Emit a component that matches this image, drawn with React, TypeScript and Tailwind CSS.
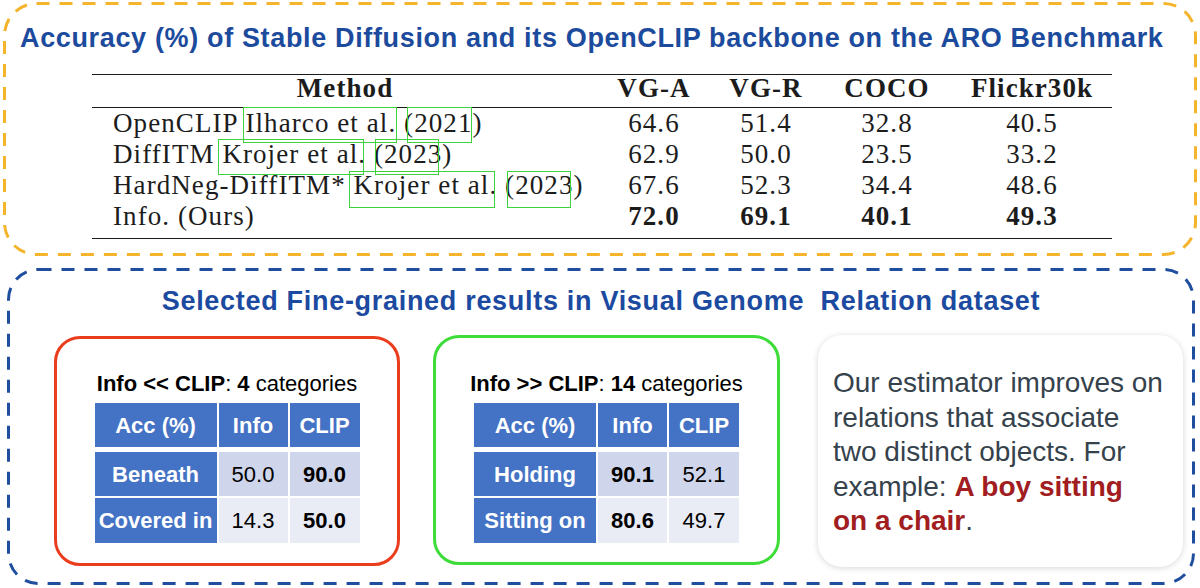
import React from 'react'

const rows = [
  { method: 'OpenCLIP Ilharco et al. (2021)', vals: ['64.6', '51.4', '32.8', '40.5'], bold: false },
  { method: 'DiffITM Krojer et al. (2023)', vals: ['62.9', '50.0', '23.5', '33.2'], bold: false },
  { method: 'HardNeg-DiffITM* Krojer et al. (2023)', vals: ['67.6', '52.3', '34.4', '48.6'], bold: false },
  { method: 'Info. (Ours)', vals: ['72.0', '69.1', '40.1', '49.3'], bold: true },
]

// green citation boxes over the table, [left, top, width, height]
const citeBoxes = [
  [151, 33.5, 154, 36],
  [315, 33.5, 65, 36],
  [126, 65.5, 146, 36],
  [283, 65.5, 64, 36],
  [257, 97.5, 146, 37],
  [415, 97.5, 64, 37],
]

function DashedFrame({ w, h, r, color }: { w: number; h: number; r: number; color: string }) {
  return (
    <svg className="pointer-events-none absolute left-0 top-0" width={w} height={h}>
      <rect x={1.5} y={1.5} width={w - 3} height={h - 3} rx={r} fill="none" stroke={color} strokeWidth={3} strokeDasharray="13 10" />
    </svg>
  )
}

type Cell = { text: string; bold?: boolean }

function MiniTable({ body }: { body: [string, Cell, Cell][] }) {
  return (
    <div className="mx-auto w-[265px] text-[22px]">
      <div className="grid h-[44px] grid-cols-[122px_69px_70px] gap-x-[2px] font-bold text-white">
        {['Acc (%)', 'Info', 'CLIP'].map((h) => (
          <div key={h} className="flex items-center justify-center bg-[#4472c4]">{h}</div>
        ))}
      </div>
      {body.map(([label, a, b], i) => (
        <div
          key={label}
          className={i === 0 ? 'mt-[5px] grid h-[44px] grid-cols-[122px_69px_70px] gap-x-[2px]' : 'mt-[2px] grid h-[45px] grid-cols-[122px_69px_70px] gap-x-[2px]'}
        >
          <div className="flex items-center justify-center whitespace-nowrap bg-[#4472c4] font-bold text-white">{label}</div>
          {[a, b].map((c, j) => (
            <div
              key={j}
              className={`flex items-center justify-center text-black ${i === 0 ? 'bg-[#cfd5ea]' : 'bg-[#e9ebf5]'} ${c.bold ? 'font-bold' : ''}`}
            >
              {c.text}
            </div>
          ))}
        </div>
      ))}
    </div>
  )
}

export default function App() {
  return (
    <div className="h-[588px] w-[1200px] overflow-hidden bg-white pt-[2px] font-['Liberation_Sans',Arial,sans-serif]">
      <section className="relative ml-[3px] h-[254px] w-[1194px]">
        <DashedFrame w={1194} h={254} r={32} color="#f4b42c" />
        <h1 className="whitespace-nowrap pl-[17px] pt-[22px] text-[27px] font-bold leading-[28.75px] tracking-[0.65px] text-[#1c4b9d]">
          Accuracy (%) of Stable Diffusion and its OpenCLIP backbone on the ARO Benchmark
        </h1>
        <div className="relative ml-[89px] mt-[21px] w-[1020px] font-['Liberation_Serif','Times_New_Roman',serif] text-[27px] tracking-[0.04em] text-[#1c1c1c]">
          <div className="grid grid-cols-[506px_112px_112px_130px_160px] border-y-[1.5px] border-[#1a1a1a] pb-[6px] font-bold leading-[26px]">
            <div className="text-center">Method</div>
            <div className="text-center">VG-A</div>
            <div className="text-center">VG-R</div>
            <div className="text-center">COCO</div>
            <div className="text-center">Flickr30k</div>
          </div>
          <div className="border-b-[1.5px] border-[#1a1a1a] pb-[6.5px] leading-[31px]">
            {rows.map((r) => (
              <div key={r.method} className="grid grid-cols-[506px_112px_112px_130px_160px]">
                <div className="whitespace-nowrap pl-[21px]">{r.method}</div>
                {r.vals.map((v, i) => (
                  <div key={i} className={r.bold ? 'text-center font-bold' : 'text-center'}>{v}</div>
                ))}
              </div>
            ))}
          </div>
          {citeBoxes.map(([l, t, w, h], i) => (
            <div
              key={i}
              className="pointer-events-none absolute border-[1.5px] border-[#3fd23f]"
              style={{ left: l, top: t, width: w, height: h }}
            />
          ))}
        </div>
      </section>

      <section className="relative ml-[7px] mt-[12px] h-[317px] w-[1188px]">
        <DashedFrame w={1188} h={317} r={30} color="#1f4e9e" />
        <h2 className="whitespace-pre pt-[19px] text-center text-[27px] font-bold leading-[28px] tracking-[0.7px] text-[#1b4aa0]">
          Selected Fine-grained results in Visual Genome  Relation dataset
        </h2>
        <div className="mt-[20px] flex items-start">
          <div className="ml-[47px] mt-[1px] h-[230px] w-[346px] rounded-[26px] border-[3px] border-[#ea3d1e] pt-[32px]">
            <p className="text-center text-[22px] leading-[26px] text-black">
              <b>Info &lt;&lt; CLIP</b>: <b>4</b> categories
            </p>
            <div className="mt-[6px]">
              <MiniTable
                body={[
                  ['Beneath', { text: '50.0' }, { text: '90.0', bold: true }],
                  ['Covered in', { text: '14.3' }, { text: '50.0', bold: true }],
                ]}
              />
            </div>
          </div>
          <div className="ml-[33px] h-[230px] w-[347px] rounded-[26px] border-[3px] border-[#3edc38] pt-[33px]">
            <p className="text-center text-[22px] leading-[26px] text-black">
              <b>Info &gt;&gt; CLIP</b>: <b>14</b> categories
            </p>
            <div className="mt-[6px]">
              <MiniTable
                body={[
                  ['Holding', { text: '90.1', bold: true }, { text: '52.1' }],
                  ['Sitting on', { text: '80.6', bold: true }, { text: '49.7' }],
                ]}
              />
            </div>
          </div>
          <div className="ml-[38px] h-[232px] w-[365px] rounded-[24px] bg-white pl-[15px] pt-[31px] text-[28px] leading-[34.5px] text-[#35424c] shadow-[0_1px_6px_rgba(0,0,0,0.16)]">
            Our estimator improves on
            <br />
            relations that associate
            <br />
            two distinct objects. For
            <br />
            example: <b className="text-[#a11d21]">A boy sitting</b>
            <br />
            <b className="text-[#a11d21]">on a chair</b>.
          </div>
        </div>
      </section>
    </div>
  )
}
